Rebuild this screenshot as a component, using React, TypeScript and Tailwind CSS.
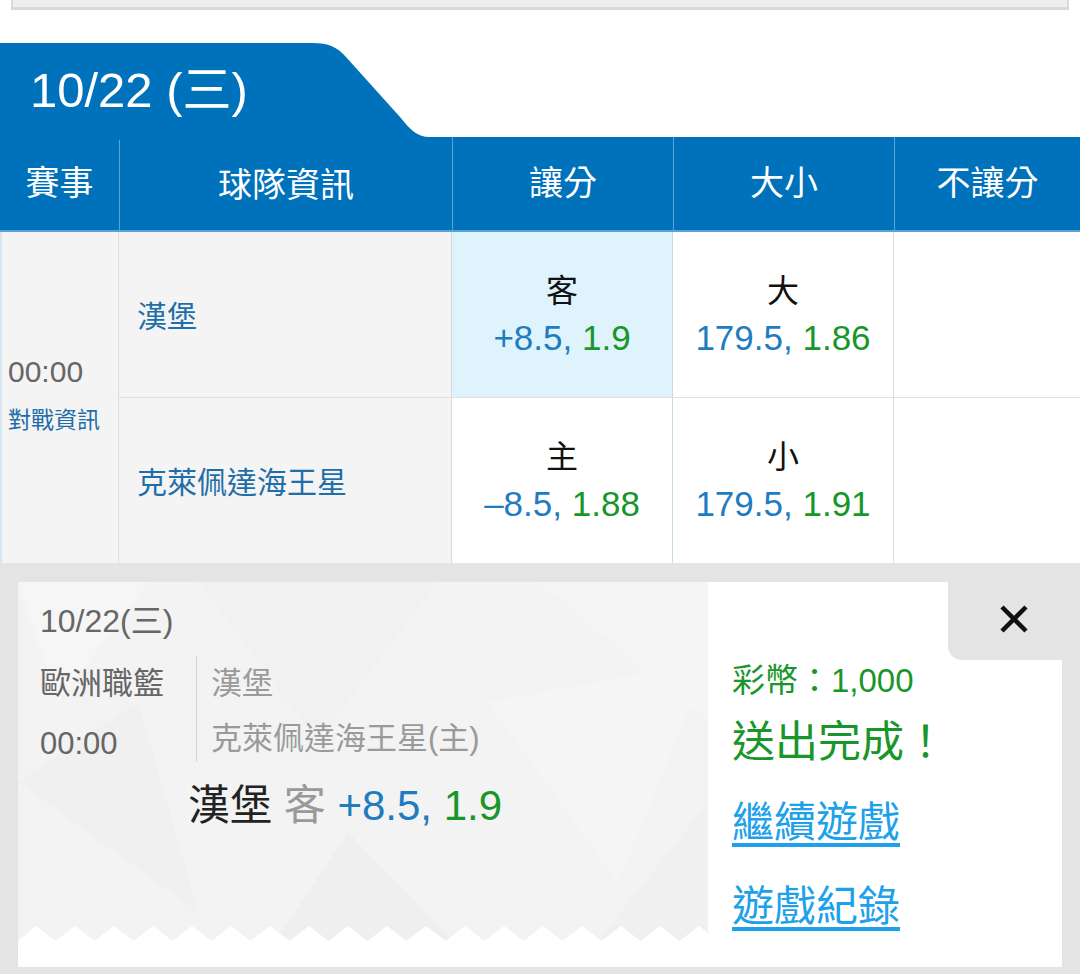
import React from 'react';

type Line = { side: string; line: string; price: string };

const rows: { team: string; spread: Line; total: Line; hl?: boolean }[] = [
  { team: '漢堡', spread: { side: '客', line: '+8.5,', price: '1.9' }, total: { side: '大', line: '179.5,', price: '1.86' }, hl: true },
  { team: '克萊佩達海王星', spread: { side: '主', line: '–8.5,', price: '1.88' }, total: { side: '小', line: '179.5,', price: '1.91' } },
];

const OddsCell = ({ data, className }: { data: Line; className: string }) => (
  <div className={`flex flex-col items-center justify-center ${className}`}>
    <span className="text-[32px] leading-[46px] text-[#111]">{data.side}</span>
    <span className="text-[35px] leading-[48px]">
      <span className="text-[#1f7cc0]">{data.line}</span> <span className="text-[#18962a]">{data.price}</span>
    </span>
  </div>
);

const Pattern = () => (
  <svg className="absolute inset-0 w-full h-full" viewBox="0 0 690 385" preserveAspectRatio="none">
    <polygon points="0,0 130,0 40,120" fill="#f6f6f6" />
    <polygon points="180,0 420,0 300,160" fill="#f1f1f1" />
    <polygon points="520,0 690,0 690,140" fill="#f5f5f5" />
    <polygon points="0,200 120,120 180,330" fill="#f0f0f0" />
    <polygon points="240,385 330,250 460,385" fill="#efefef" />
    <polygon points="470,120 690,80 600,300" fill="#f5f5f5" />
    <polygon points="560,385 690,220 690,385" fill="#f0f0f0" />
  </svg>
);

const Zigzag = () => {
  const pts: string[] = ['0,41', '0,15'];
  for (let x = 18; x < 700; x += 39) {
    pts.push(`${x},0`, `${x + 19.5},15`);
  }
  pts.push('690,15', '690,41');
  return (
    <svg className="absolute bottom-0 left-0 w-[690px] h-[41px]" viewBox="0 0 690 41">
      <polygon points={pts.join(' ')} fill="#ffffff" />
    </svg>
  );
};

export default function App() {
  return (
    <div className="w-[1080px] h-[974px] overflow-hidden bg-white flex flex-col font-['Liberation_Sans','Noto_Sans_CJK_TC',sans-serif]">
      {/* top box edge */}
      <div className="mx-[11px] h-[10px] shrink-0 bg-[#eeeeee] border-x-2 border-b-[3px] border-[#d9d9d9]" />

      {/* date tab */}
      <div className="mt-[33px] flex h-[94px] shrink-0">
        <div className="w-[312px] bg-[#0071bb] pl-[30px] flex items-center text-white text-[49px] leading-none">
          10/22 (三)
        </div>
        <svg width="120" height="94" viewBox="0 0 120 94">
          <path d="M0 0 C17 0 25 4 34 14 L88 74 C98 86 104 94 118 94 L0 94 Z" fill="#0071bb" />
        </svg>
      </div>

      {/* header */}
      <div className="flex h-[93px] shrink-0 bg-[#0071bb] text-white text-[34px]">
        <div className="w-[119px] flex items-center justify-center">賽事</div>
        <div className="w-[333px] flex items-center justify-center border-l border-[#5aa3d6] mt-[3px]">球隊資訊</div>
        <div className="w-[221px] flex items-center justify-center border-l border-[#5aa3d6]">讓分</div>
        <div className="w-[221px] flex items-center justify-center border-l border-[#5aa3d6]">大小</div>
        <div className="flex-1 flex items-center justify-center border-l border-[#5aa3d6]">不讓分</div>
      </div>

      {/* body */}
      <div className="flex h-[333px] shrink-0 border-t-2 border-[#5aa3d6]">
        <div className="w-[119px] bg-[#f4f4f4] border-l-2 border-[#d5e5f1] border-r border-r-[#dddddd] pl-[6px] pt-[122px] flex flex-col">
          <span className="text-[30px] leading-[36px] text-[#666]">00:00</span>
          <span className="mt-[16px] text-[23px] leading-[28px] text-[#1f6ea8]">對戰資訊</span>
        </div>
        <div className="flex-1 flex flex-col">
          {rows.map((r, i) => (
            <div key={i} className={`flex flex-1 ${i === 0 ? 'border-b border-[#e0e0e0]' : ''}`}>
              <div className="w-[333px] bg-[#f4f4f4] border-r border-[#d8d8d8] pl-[18px] pt-[4px] flex items-center text-[30px] text-[#1f6ea8]">
                {r.team}
              </div>
              <OddsCell data={r.spread} className={`w-[221px] border-r border-[#c9d9e6] ${r.hl ? 'bg-[#def3fc]' : 'bg-white'}`} />
              <OddsCell data={r.total} className="w-[221px] border-r border-[#dddddd] bg-white" />
              <div className="flex-1 bg-white" />
            </div>
          ))}
        </div>
      </div>

      {/* bet slip */}
      <div className="flex-1 bg-[#e4e4e4] px-[18px] pt-[19px]">
        <div className="flex h-[385px]">
          <div className="relative w-[690px] bg-[#f3f3f3] overflow-hidden">
            <Pattern />
            <Zigzag />
            <div className="relative pl-[22px] pt-[21px] text-[#666]">
              <div className="text-[32px] leading-[36px]">10/22(三)</div>
              <div className="flex mt-[17px]">
                <div className="w-[156px] pt-[10px] text-[31px] leading-[36px]">
                  <div>歐洲職籃</div>
                  <div className="mt-[24px]">00:00</div>
                </div>
                <div className="h-[106px] border-l border-[#d4d4d4] pl-[14px] pt-[10px] text-[31px] leading-[36px] text-[#9a9a9a]">
                  <div>漢堡</div>
                  <div className="mt-[19px]">克萊佩達海王星(主)</div>
                </div>
              </div>
              <div className="ml-[148px] mt-[20px] text-[42px] leading-[48px] whitespace-nowrap">
                <span className="text-[#222]">漢堡</span> <span className="text-[#999]">客</span>{' '}
                <span className="text-[#1f7cc0]">+8.5,</span> <span className="text-[#18962a]">1.9</span>
              </div>
            </div>
          </div>

          <div className="flex-1 bg-white flex flex-col">
            <div className="flex justify-end">
              <div className="w-[114px] h-[78px] bg-[#e4e4e4] rounded-bl-[14px] flex items-center justify-end pr-[34px] pb-[4px]">
                <svg width="28" height="28" viewBox="0 0 28 28">
                  <path d="M2 2 L26 26 M26 2 L2 26" stroke="#111" strokeWidth="4.5" />
                </svg>
              </div>
            </div>
            <div className="pl-[24px] flex flex-col items-start">
              <div className="mt-[1px] text-[33px] leading-[40px] text-[#18962a]">彩幣：1,000</div>
              <div className="mt-[15px] text-[43px] leading-[52px] text-[#18962a]">送出完成！</div>
              <a className="mt-[30px] text-[42px] leading-[50px] text-[#1ea1ea] underline underline-offset-[6px]">繼續遊戲</a>
              <a className="mt-[34px] text-[42px] leading-[50px] text-[#1ea1ea] underline underline-offset-[6px]">遊戲紀錄</a>
            </div>
          </div>
        </div>
      </div>
    </div>
  );
}
